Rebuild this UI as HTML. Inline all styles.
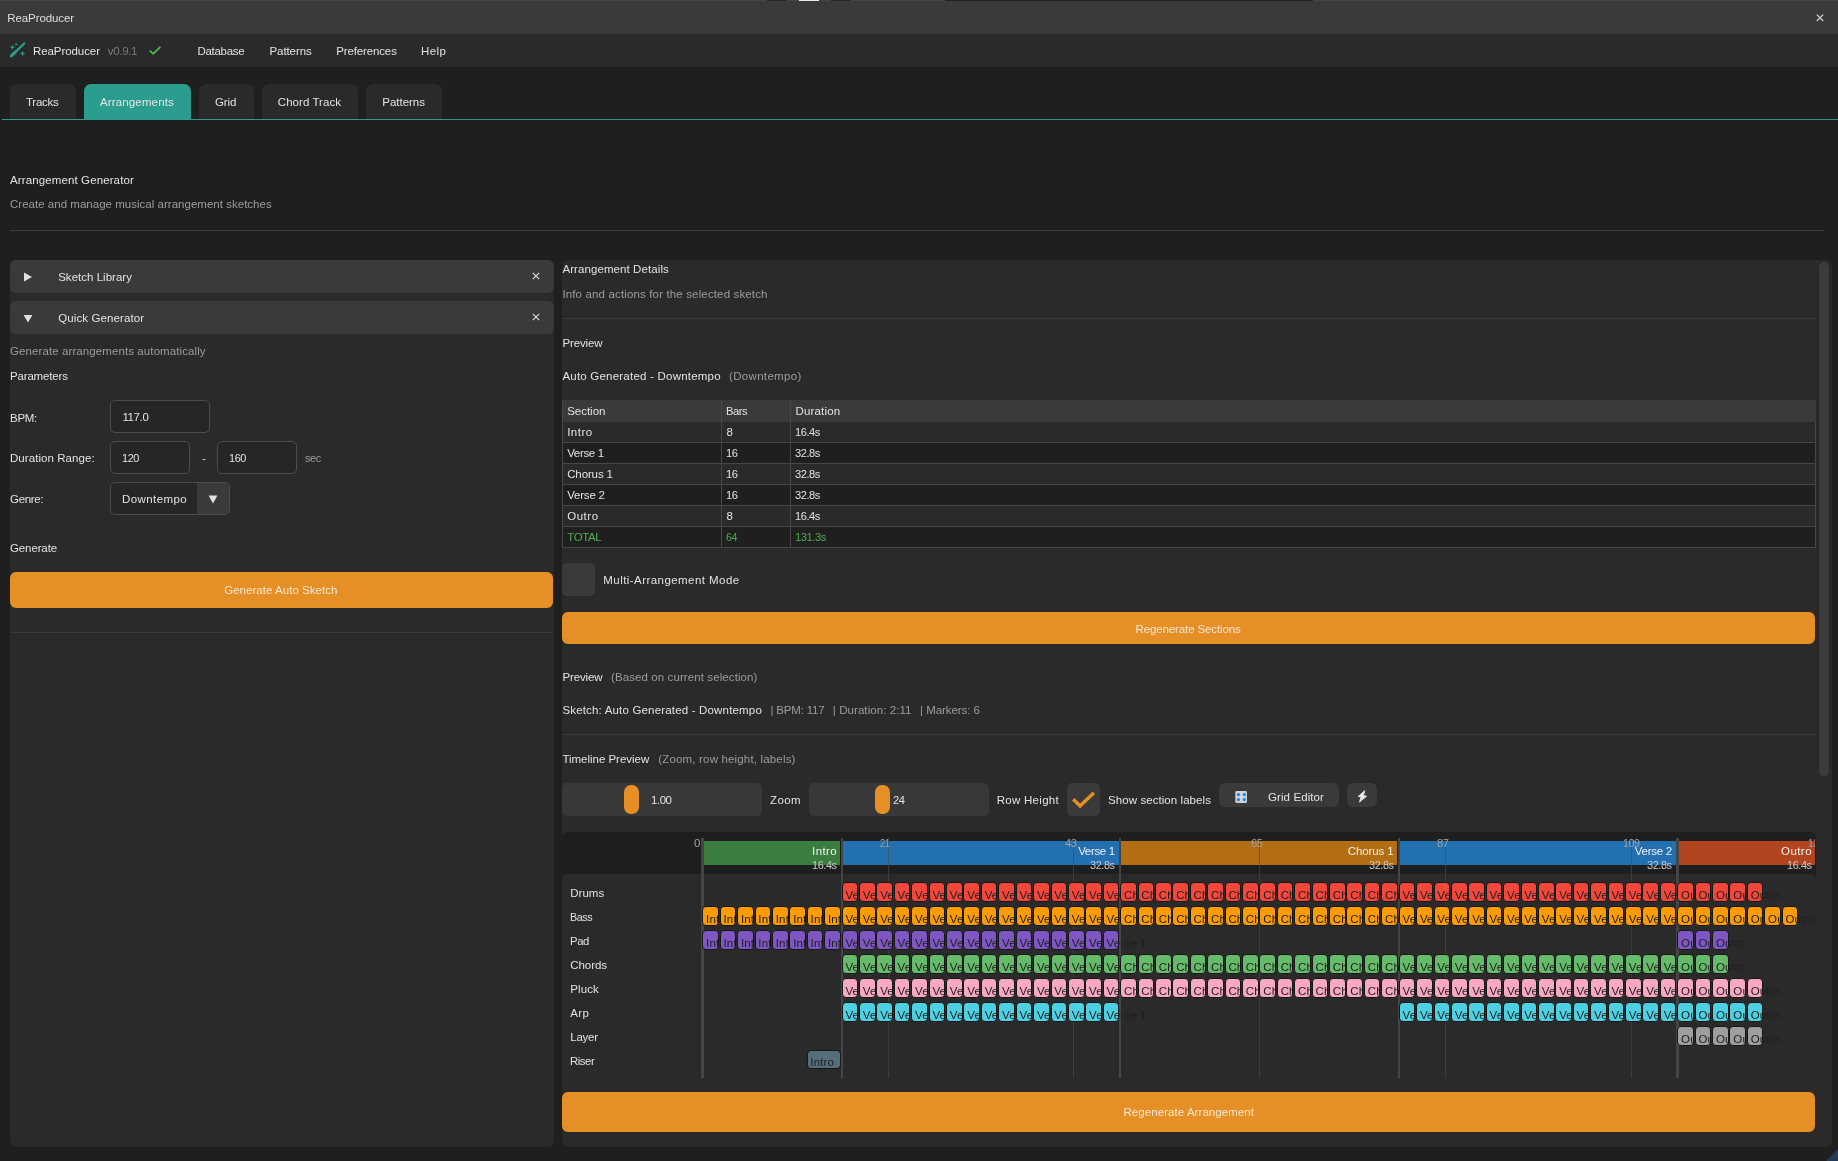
<!DOCTYPE html>
<html><head><meta charset="utf-8"><title>ReaProducer</title>
<style>
html,body{margin:0;padding:0;}
body{width:1838px;height:1161px;position:relative;overflow:hidden;background:#1f1f1f;will-change:transform;font-family:"Liberation Sans",sans-serif;font-size:11.5px;letter-spacing:-0.2px;}
.r{position:absolute;}
.t{position:absolute;white-space:nowrap;line-height:14px;}
.c{position:absolute;width:14.6px;border:1px solid #171717;border-radius:4px;color:#1e1e1e;font-size:11.5px;line-height:14px;box-sizing:content-box;white-space:nowrap;text-indent:2.8px;padding-top:4.7px;height:13.2px;letter-spacing:0.15px;}
</style></head><body>
<div class="r" style="left:0px;top:0px;width:1838px;height:34px;background:#3a3a3a;"></div>
<div class="r" style="left:0px;top:0px;width:1838px;height:1px;background:#444444;"></div>
<div class="r" style="left:767px;top:0px;width:20px;height:1px;background:#262626;"></div>
<div class="r" style="left:798.6px;top:0px;width:20.600000000000023px;height:1px;background:#e8e8e8;"></div>
<div class="r" style="left:831px;top:0px;width:20px;height:1px;background:#262626;"></div>
<div class="r" style="left:945px;top:0px;width:368px;height:1px;background:#232323;"></div>
<div class="t" style="left:7.30px;top:10.70px;color:#dedede;letter-spacing:-0.096px;">ReaProducer</div>
<svg class="r" style="left:1814px;top:12px" width="12" height="12" viewBox="0 0 12 12"><path d="M2.8 2.6L9.2 9.0M9.2 2.6L2.8 9.0" stroke="#d0d0d0" stroke-width="1.3"/></svg>
<div class="r" style="left:0px;top:34px;width:1838px;height:33px;background:#2a2a2a;"></div>
<svg class="r" style="left:5px;top:38px" width="30" height="24" viewBox="0 0 30 24">
<path d="M6.3 17.9 L19.3 5.5" stroke="#2a9d8f" stroke-width="2.3" stroke-linecap="round"/>
<path d="M6.2 18.0 L10.6 13.8" stroke="#2a9d8f" stroke-width="3.0" stroke-linecap="round"/>
<path d="M7.40 6.70 L8.13 8.57 L10.00 9.30 L8.13 10.03 L7.40 11.90 L6.67 10.03 L4.80 9.30 L6.67 8.57Z" fill="#2a9d8f"/>
<path d="M17.60 12.80 L18.36 14.74 L20.30 15.50 L18.36 16.26 L17.60 18.20 L16.84 16.26 L14.90 15.50 L16.84 14.74Z" fill="#2a9d8f"/>
<ellipse cx="11.2" cy="6.3" rx="1.3" ry="0.9" fill="#2a9d8f"/>
</svg>
<div class="t" style="left:33.00px;top:43.90px;color:#e2e2e2;letter-spacing:-0.076px;">ReaProducer</div>
<div class="t" style="left:107.80px;top:43.90px;color:#7c7c7c;letter-spacing:-0.325px;">v0.9.1</div>
<svg class="r" style="left:148px;top:45px" width="14" height="11" viewBox="0 0 14 11"><path d="M1.8 5.6 L5.2 8.9 L12.4 1.8" stroke="#4cbb55" stroke-width="1.7" fill="none"/></svg>
<div class="t" style="left:197.40px;top:43.90px;color:#e2e2e2;letter-spacing:-0.276px;">Database</div>
<div class="t" style="left:269.50px;top:43.90px;color:#e2e2e2;letter-spacing:-0.089px;">Patterns</div>
<div class="t" style="left:336.20px;top:43.90px;color:#e2e2e2;letter-spacing:-0.131px;">Preferences</div>
<div class="t" style="left:421.10px;top:43.90px;color:#e2e2e2;letter-spacing:0.382px;">Help</div>
<div class="r" style="left:10px;top:84px;width:66px;height:35px;background:#2a2a2a;border-radius:7px 7px 0 0;"></div>
<div class="t" style="left:26.00px;top:94.90px;color:#e2e2e2;letter-spacing:-0.265px;">Tracks</div>
<div class="r" style="left:84px;top:84px;width:107px;height:35px;background:#2a9d8f;border-radius:7px 7px 0 0;"></div>
<div class="t" style="left:100.00px;top:94.90px;color:#e6e6e6;letter-spacing:0.138px;">Arrangements</div>
<div class="r" style="left:199px;top:84px;width:55px;height:35px;background:#2a2a2a;border-radius:7px 7px 0 0;"></div>
<div class="t" style="left:215.00px;top:94.90px;color:#e2e2e2;letter-spacing:-0.075px;">Grid</div>
<div class="r" style="left:262px;top:84px;width:96px;height:35px;background:#2a2a2a;border-radius:7px 7px 0 0;"></div>
<div class="t" style="left:277.80px;top:94.90px;color:#e2e2e2;letter-spacing:0.055px;">Chord Track</div>
<div class="r" style="left:366px;top:84px;width:76px;height:35px;background:#2a2a2a;border-radius:7px 7px 0 0;"></div>
<div class="t" style="left:382.30px;top:94.90px;color:#e2e2e2;letter-spacing:-0.018px;">Patterns</div>
<div class="r" style="left:2px;top:119px;width:1836px;height:1px;background:#2a9d8f;"></div>
<div class="t" style="left:10.00px;top:172.50px;color:#e2e2e2;letter-spacing:0.117px;">Arrangement Generator</div>
<div class="t" style="left:10.00px;top:197.00px;color:#9c9c9c;letter-spacing:0.020px;">Create and manage musical arrangement sketches</div>
<div class="r" style="left:10px;top:230px;width:1814px;height:1px;background:#3a3a3a;"></div>
<div class="r" style="left:10px;top:260px;width:544px;height:887px;background:#2a2a2a;border-radius:7px;"></div>
<div class="r" style="left:10px;top:260px;width:544px;height:33px;background:#3a3a3a;border-radius:6px;"></div>
<svg class="r" style="left:23px;top:271.5px" width="10" height="10" viewBox="0 0 10 10"><path d="M1 0.5 L9 5 L1 9.5z" fill="#e0e0e0"/></svg>
<div class="t" style="left:58.20px;top:270.00px;color:#e2e2e2;letter-spacing:0.015px;">Sketch Library</div>
<svg class="r" style="left:531px;top:271px" width="10" height="10" viewBox="0 0 10 10"><path d="M1.8 1.8L8.2 8.2M8.2 1.8L1.8 8.2" stroke="#dadada" stroke-width="1.2"/></svg>
<div class="r" style="left:10px;top:301px;width:544px;height:33px;background:#3a3a3a;border-radius:6px;"></div>
<svg class="r" style="left:23px;top:313.5px" width="10" height="10" viewBox="0 0 10 10"><path d="M0.6 1 L9.4 1 L5 8.6z" fill="#e0e0e0"/></svg>
<div class="t" style="left:58.20px;top:311.00px;color:#e2e2e2;letter-spacing:0.117px;">Quick Generator</div>
<svg class="r" style="left:531px;top:312px" width="10" height="10" viewBox="0 0 10 10"><path d="M1.8 1.8L8.2 8.2M8.2 1.8L1.8 8.2" stroke="#dadada" stroke-width="1.2"/></svg>
<div class="t" style="left:10.00px;top:344.00px;color:#9c9c9c;letter-spacing:0.094px;">Generate arrangements automatically</div>
<div class="t" style="left:10.00px;top:369.20px;color:#e2e2e2;letter-spacing:-0.172px;">Parameters</div>
<div class="t" style="left:10.00px;top:410.50px;color:#e2e2e2;letter-spacing:-0.272px;">BPM:</div>
<div class="r" style="left:110px;top:400px;width:100px;height:33px;background:#262626;border:1px solid #4c4c4c;box-sizing:border-box;border-radius:5px;"></div>
<div class="t" style="left:122.40px;top:410.10px;color:#e2e2e2;letter-spacing:-0.381px;">117.0</div>
<div class="t" style="left:10.00px;top:451.40px;color:#e2e2e2;letter-spacing:0.061px;">Duration Range:</div>
<div class="r" style="left:110px;top:441px;width:80px;height:33px;background:#262626;border:1px solid #4c4c4c;box-sizing:border-box;border-radius:5px;"></div>
<div class="t" style="left:122.40px;top:451.10px;color:#e2e2e2;letter-spacing:-0.450px;transform:scaleX(0.9518);transform-origin:0 0;">120</div>
<div class="t" style="left:202.00px;top:451.40px;color:#e2e2e2;letter-spacing:-0.200px;">-</div>
<div class="r" style="left:217px;top:441px;width:80px;height:33px;background:#262626;border:1px solid #4c4c4c;box-sizing:border-box;border-radius:5px;"></div>
<div class="t" style="left:229.40px;top:451.10px;color:#e2e2e2;letter-spacing:-0.450px;transform:scaleX(0.9518);transform-origin:0 0;">160</div>
<div class="t" style="left:305.20px;top:451.40px;color:#9c9c9c;letter-spacing:-0.450px;transform:scaleX(0.9533);transform-origin:0 0;">sec</div>
<div class="t" style="left:10.00px;top:492.40px;color:#e2e2e2;letter-spacing:-0.311px;">Genre:</div>
<div class="r" style="left:110px;top:482px;width:120px;height:33px;background:#262626;border:1px solid #4c4c4c;box-sizing:border-box;border-radius:5px;"></div>
<div class="r" style="left:197px;top:483px;width:32px;height:31px;background:#3a3a3a;border-radius:0 4px 4px 0;"></div>
<svg class="r" style="left:208px;top:494.5px" width="10" height="9" viewBox="0 0 10 9"><path d="M0.6 0.6 L9.4 0.6 L5 8.4z" fill="#e0e0e0"/></svg>
<div class="t" style="left:122.00px;top:492.40px;color:#e2e2e2;letter-spacing:0.417px;">Downtempo</div>
<div class="t" style="left:10.00px;top:541.20px;color:#e2e2e2;letter-spacing:-0.120px;">Generate</div>
<div class="r" style="left:10px;top:572px;width:543px;height:36px;background:#e58f26;border-radius:6px;"></div>
<div class="t" style="left:224.20px;top:582.90px;color:#f6e7d2;letter-spacing:0.036px;">Generate Auto Sketch</div>
<div class="r" style="left:10px;top:632px;width:543px;height:1px;background:#3a3a3a;"></div>
<div class="r" style="left:562px;top:260px;width:1270px;height:887px;background:#2a2a2a;border-radius:7px;"></div>
<div class="r" style="left:1819px;top:262px;width:10px;height:514px;background:#3c3c3c;border-radius:5px;"></div>
<div class="t" style="left:562.40px;top:261.60px;color:#e2e2e2;letter-spacing:0.088px;">Arrangement Details</div>
<div class="t" style="left:562.40px;top:286.50px;color:#9c9c9c;letter-spacing:0.145px;">Info and actions for the selected sketch</div>
<div class="r" style="left:562px;top:318px;width:1254px;height:1px;background:#3a3a3a;"></div>
<div class="t" style="left:562.40px;top:335.80px;color:#e2e2e2;letter-spacing:-0.107px;">Preview</div>
<div class="t" style="left:562.40px;top:369.10px;color:#e2e2e2;letter-spacing:0.217px;">Auto Generated - Downtempo</div>
<div class="t" style="left:729.00px;top:369.10px;color:#9c9c9c;letter-spacing:0.328px;">(Downtempo)</div>
<div class="r" style="left:562px;top:400px;width:1254px;height:22px;background:#3a3a3a;"></div>
<div class="t" style="left:567.20px;top:404.10px;color:#e2e2e2;letter-spacing:-0.025px;">Section</div>
<div class="t" style="left:726.40px;top:404.10px;color:#e2e2e2;letter-spacing:-0.450px;transform:scaleX(0.9734);transform-origin:0 0;">Bars</div>
<div class="t" style="left:795.40px;top:404.10px;color:#e2e2e2;letter-spacing:0.190px;">Duration</div>
<div class="r" style="left:562px;top:422px;width:1254px;height:21px;background:#2a2a2a;border-bottom:1px solid #474747;box-sizing:border-box;"></div>
<div class="t" style="left:567.20px;top:424.70px;color:#e2e2e2;letter-spacing:0.472px;">Intro</div>
<div class="t" style="left:726.40px;top:424.70px;color:#e2e2e2;letter-spacing:-0.200px;">8</div>
<div class="t" style="left:795.40px;top:424.70px;color:#e2e2e2;letter-spacing:-0.450px;transform:scaleX(0.9647);transform-origin:0 0;">16.4s</div>
<div class="r" style="left:562px;top:443px;width:1254px;height:21px;background:#1f1f1f;border-bottom:1px solid #474747;box-sizing:border-box;"></div>
<div class="t" style="left:567.20px;top:445.70px;color:#e2e2e2;letter-spacing:-0.349px;">Verse 1</div>
<div class="t" style="left:726.40px;top:445.70px;color:#e2e2e2;letter-spacing:-0.450px;transform:scaleX(0.9726);transform-origin:0 0;">16</div>
<div class="t" style="left:795.40px;top:445.70px;color:#e2e2e2;letter-spacing:-0.450px;transform:scaleX(0.9647);transform-origin:0 0;">32.8s</div>
<div class="r" style="left:562px;top:464px;width:1254px;height:21px;background:#2a2a2a;border-bottom:1px solid #474747;box-sizing:border-box;"></div>
<div class="t" style="left:567.20px;top:466.70px;color:#e2e2e2;letter-spacing:-0.124px;">Chorus 1</div>
<div class="t" style="left:726.40px;top:466.70px;color:#e2e2e2;letter-spacing:-0.450px;transform:scaleX(0.9726);transform-origin:0 0;">16</div>
<div class="t" style="left:795.40px;top:466.70px;color:#e2e2e2;letter-spacing:-0.450px;transform:scaleX(0.9647);transform-origin:0 0;">32.8s</div>
<div class="r" style="left:562px;top:485px;width:1254px;height:21px;background:#1f1f1f;border-bottom:1px solid #474747;box-sizing:border-box;"></div>
<div class="t" style="left:567.20px;top:487.70px;color:#e2e2e2;letter-spacing:-0.199px;">Verse 2</div>
<div class="t" style="left:726.40px;top:487.70px;color:#e2e2e2;letter-spacing:-0.450px;transform:scaleX(0.9726);transform-origin:0 0;">16</div>
<div class="t" style="left:795.40px;top:487.70px;color:#e2e2e2;letter-spacing:-0.450px;transform:scaleX(0.9647);transform-origin:0 0;">32.8s</div>
<div class="r" style="left:562px;top:506px;width:1254px;height:21px;background:#2a2a2a;border-bottom:1px solid #474747;box-sizing:border-box;"></div>
<div class="t" style="left:567.20px;top:508.70px;color:#e2e2e2;letter-spacing:0.535px;">Outro</div>
<div class="t" style="left:726.40px;top:508.70px;color:#e2e2e2;letter-spacing:-0.200px;">8</div>
<div class="t" style="left:795.40px;top:508.70px;color:#e2e2e2;letter-spacing:-0.450px;transform:scaleX(0.9647);transform-origin:0 0;">16.4s</div>
<div class="r" style="left:562px;top:527px;width:1254px;height:21px;background:#1f1f1f;border-bottom:1px solid #474747;box-sizing:border-box;"></div>
<div class="t" style="left:567.20px;top:529.70px;color:#4cae4f;letter-spacing:-0.374px;">TOTAL</div>
<div class="t" style="left:726.40px;top:529.70px;color:#4cae4f;letter-spacing:-0.450px;transform:scaleX(0.9240);transform-origin:0 0;">64</div>
<div class="t" style="left:795.40px;top:529.70px;color:#4cae4f;letter-spacing:-0.450px;transform:scaleX(0.9729);transform-origin:0 0;">131.3s</div>
<div class="r" style="left:562px;top:400px;width:1px;height:147px;background:#474747;"></div>
<div class="r" style="left:1815px;top:422px;width:1px;height:125px;background:#474747;"></div>
<div class="r" style="left:721px;top:400px;width:1px;height:147px;background:#474747;"></div>
<div class="r" style="left:790px;top:400px;width:1px;height:147px;background:#474747;"></div>
<div class="r" style="left:562px;top:563px;width:33px;height:33px;background:#3a3a3a;border-radius:5px;"></div>
<div class="t" style="left:603.30px;top:573.10px;color:#e2e2e2;letter-spacing:0.441px;">Multi-Arrangement Mode</div>
<div class="r" style="left:562px;top:612px;width:1253px;height:32px;background:#e58f26;border-radius:6px;"></div>
<div class="t" style="left:1135.60px;top:621.70px;color:#f6e7d2;letter-spacing:-0.128px;">Regenerate Sections</div>
<div class="t" style="left:562.40px;top:669.60px;color:#e2e2e2;letter-spacing:-0.107px;">Preview</div>
<div class="t" style="left:611.00px;top:669.60px;color:#9c9c9c;letter-spacing:0.096px;">(Based on current selection)</div>
<div class="t" style="left:562.40px;top:702.90px;color:#e2e2e2;letter-spacing:0.173px;">Sketch: Auto Generated - Downtempo</div>
<div class="t" style="left:770.50px;top:702.90px;color:#9c9c9c;letter-spacing:-0.181px;">| BPM: 117</div>
<div class="t" style="left:832.80px;top:702.90px;color:#9c9c9c;letter-spacing:0.076px;">| Duration: 2:11</div>
<div class="t" style="left:920.10px;top:702.90px;color:#9c9c9c;letter-spacing:-0.055px;">| Markers: 6</div>
<div class="r" style="left:562px;top:734px;width:1254px;height:1px;background:#3a3a3a;"></div>
<div class="t" style="left:562.40px;top:751.90px;color:#e2e2e2;letter-spacing:-0.017px;">Timeline Preview</div>
<div class="t" style="left:658.30px;top:751.90px;color:#9c9c9c;letter-spacing:0.166px;">(Zoom, row height, labels)</div>
<div class="r" style="left:562px;top:783px;width:200px;height:33px;background:#383838;border-radius:5px;"></div>
<div class="r" style="left:624px;top:785px;width:15px;height:29px;background:#e58f26;border-radius:7px;"></div>
<div class="t" style="left:651.10px;top:793.20px;color:#e2e2e2;letter-spacing:-0.450px;transform:scaleX(0.9986);transform-origin:0 0;">1.00</div>
<div class="t" style="left:769.90px;top:793.20px;color:#e2e2e2;letter-spacing:0.469px;">Zoom</div>
<div class="r" style="left:809px;top:783px;width:180px;height:33px;background:#383838;border-radius:5px;"></div>
<div class="r" style="left:875px;top:785px;width:15px;height:29px;background:#e58f26;border-radius:7px;"></div>
<div class="t" style="left:893.20px;top:793.20px;color:#e2e2e2;letter-spacing:-0.450px;transform:scaleX(0.9726);transform-origin:0 0;">24</div>
<div class="t" style="left:996.70px;top:793.20px;color:#e2e2e2;letter-spacing:0.284px;">Row Height</div>
<div class="r" style="left:1067px;top:783px;width:33px;height:33px;background:#3a3a3a;border-radius:5px;"></div>
<svg class="r" style="left:1067px;top:783px" width="33" height="33" viewBox="0 0 33 33"><path d="M6.2 16.3 L13.1 23 L26.9 9.75" stroke="#e58f26" stroke-width="3.4" fill="none"/></svg>
<div class="t" style="left:1108.10px;top:793.20px;color:#e2e2e2;letter-spacing:0.065px;">Show section labels</div>
<div class="r" style="left:1219px;top:783px;width:120px;height:24px;background:#3a3a3a;border-radius:6px;"></div>
<svg class="r" style="left:1235px;top:791px" width="13" height="13" viewBox="0 0 13 13">
<rect x="0.3" y="0" width="11.7" height="11.9" rx="1.4" fill="#d2d2d2"/>
<path d="M6.2 0.8 V11.2" stroke="#e6e6e6" stroke-width="0.8"/>
<circle cx="3.5" cy="3.6" r="1.7" fill="#1a8cf0"/><circle cx="9.3" cy="3.6" r="1.7" fill="#1a8cf0"/>
<circle cx="3.5" cy="8.6" r="1.7" fill="#1a8cf0"/><circle cx="9.3" cy="8.6" r="1.7" fill="#1a8cf0"/>
</svg>
<div class="t" style="left:1268.00px;top:790.30px;color:#e2e2e2;letter-spacing:0.094px;">Grid Editor</div>
<div class="r" style="left:1347px;top:783px;width:30px;height:24px;background:#3a3a3a;border-radius:6px;"></div>
<svg class="r" style="left:1357px;top:790px" width="11" height="13" viewBox="0 0 11 13"><path d="M7.7 0.7 L1.2 6.4 L4.1 6.9 L2.5 12.0 L9.6 6.2 L6.5 5.7 Z" fill="#e8e8e8" stroke="#e8e8e8" stroke-width="0.9" stroke-linejoin="round"/></svg>
<div class="r" style="left:562px;top:832px;width:1254px;height:246px;background:#1e1e1e;border-radius:6px;"></div>
<div class="r" style="left:562px;top:874px;width:1254px;height:204px;background:#2a2a2a;border-radius:6px 6px 0 0;"></div>
<div class="r" style="left:703.5px;top:841px;width:136.8px;height:24px;background:#3b7d3f"></div>
<div class="r" style="left:842.8px;top:841px;width:276.1px;height:24px;background:#2270b0"></div>
<div class="r" style="left:1121.3px;top:841px;width:276.1px;height:24px;background:#b26e10"></div>
<div class="r" style="left:1399.9px;top:841px;width:276.1px;height:24px;background:#2270b0"></div>
<div class="r" style="left:1678.5px;top:841px;width:136.5px;height:24px;background:#b24520"></div>
<div class="r" style="left:887.7px;top:838px;width:1px;height:240px;background:rgba(72,72,72,0.65)"></div>
<div class="r" style="left:1073.4px;top:838px;width:1px;height:240px;background:rgba(72,72,72,0.65)"></div>
<div class="r" style="left:1259.1px;top:838px;width:1px;height:240px;background:rgba(72,72,72,0.65)"></div>
<div class="r" style="left:1444.8px;top:838px;width:1px;height:240px;background:rgba(72,72,72,0.65)"></div>
<div class="r" style="left:1630.5px;top:838px;width:1px;height:240px;background:rgba(72,72,72,0.65)"></div>
<div class="r" style="left:701.40px;top:838px;width:2.2px;height:240px;background:#454545"></div>
<div class="r" style="left:840.68px;top:838px;width:2.2px;height:240px;background:#454545"></div>
<div class="r" style="left:1119.24px;top:838px;width:2.2px;height:240px;background:#454545"></div>
<div class="r" style="left:1397.80px;top:838px;width:2.2px;height:240px;background:#454545"></div>
<div class="r" style="left:1676.36px;top:838px;width:2.2px;height:240px;background:#454545"></div>
<div class="r" style="left:0;top:830px;width:1815px;height:30px;overflow:hidden">
<div class="t" style="left:694.00px;top:5.90px;color:#a2a2a2;letter-spacing:-0.200px;font-size:11.5px;">0</div>
<div class="t" style="left:879.70px;top:5.90px;color:#a2a2a2;letter-spacing:-0.450px;transform:scaleX(0.8105);transform-origin:0 0;font-size:11.5px;">21</div>
<div class="t" style="left:1065.40px;top:5.90px;color:#a2a2a2;letter-spacing:-0.450px;transform:scaleX(0.9726);transform-origin:0 0;font-size:11.5px;">43</div>
<div class="t" style="left:1251.10px;top:5.90px;color:#a2a2a2;letter-spacing:-0.450px;transform:scaleX(0.9726);transform-origin:0 0;font-size:11.5px;">65</div>
<div class="t" style="left:1436.80px;top:5.90px;color:#a2a2a2;letter-spacing:-0.450px;transform:scaleX(0.9726);transform-origin:0 0;font-size:11.5px;">87</div>
<div class="t" style="left:1622.50px;top:5.90px;color:#a2a2a2;letter-spacing:-0.450px;transform:scaleX(0.9299);transform-origin:0 0;font-size:11.5px;">109</div>
<div class="t" style="left:1808.20px;top:5.90px;color:#a2a2a2;letter-spacing:-0.450px;transform:scaleX(0.8752);transform-origin:0 0;font-size:11.5px;">131</div>
</div>
<div class="t" style="left:812.08px;top:844.30px;color:#f0f0f0;letter-spacing:0.372px;">Intro</div>
<div class="t" style="left:811.58px;top:858.10px;color:#c8c8c8;letter-spacing:-0.450px;transform:scaleX(0.9495);transform-origin:0 0;">16.4s</div>
<div class="t" style="left:1078.14px;top:844.30px;color:#f0f0f0;letter-spacing:-0.333px;">Verse 1</div>
<div class="t" style="left:1090.14px;top:858.10px;color:#c8c8c8;letter-spacing:-0.450px;transform:scaleX(0.9495);transform-origin:0 0;">32.8s</div>
<div class="t" style="left:1347.70px;top:844.30px;color:#f0f0f0;letter-spacing:-0.095px;">Chorus 1</div>
<div class="t" style="left:1368.70px;top:858.10px;color:#c8c8c8;letter-spacing:-0.450px;transform:scaleX(0.9495);transform-origin:0 0;">32.8s</div>
<div class="t" style="left:1634.76px;top:844.30px;color:#f0f0f0;letter-spacing:-0.249px;">Verse 2</div>
<div class="t" style="left:1647.26px;top:858.10px;color:#c8c8c8;letter-spacing:-0.450px;transform:scaleX(0.9495);transform-origin:0 0;">32.8s</div>
<div class="t" style="left:1781.04px;top:844.30px;color:#f0f0f0;letter-spacing:0.435px;">Outro</div>
<div class="t" style="left:1786.54px;top:858.10px;color:#c8c8c8;letter-spacing:-0.450px;transform:scaleX(0.9495);transform-origin:0 0;">16.4s</div>
<div class="r" style="left:0;top:874px;width:1815px;height:210px;overflow:hidden">
<div class="c" style="left:841.58px;top:8px;background:#f2473a;overflow:hidden;">Verse 1</div>
<div class="c" style="left:858.99px;top:8px;background:#f2473a;overflow:hidden;">Verse 1</div>
<div class="c" style="left:876.40px;top:8px;background:#f2473a;overflow:hidden;">Verse 1</div>
<div class="c" style="left:893.81px;top:8px;background:#f2473a;overflow:hidden;">Verse 1</div>
<div class="c" style="left:911.22px;top:8px;background:#f2473a;overflow:hidden;">Verse 1</div>
<div class="c" style="left:928.63px;top:8px;background:#f2473a;overflow:hidden;">Verse 1</div>
<div class="c" style="left:946.04px;top:8px;background:#f2473a;overflow:hidden;">Verse 1</div>
<div class="c" style="left:963.45px;top:8px;background:#f2473a;overflow:hidden;">Verse 1</div>
<div class="c" style="left:980.86px;top:8px;background:#f2473a;overflow:hidden;">Verse 1</div>
<div class="c" style="left:998.27px;top:8px;background:#f2473a;overflow:hidden;">Verse 1</div>
<div class="c" style="left:1015.68px;top:8px;background:#f2473a;overflow:hidden;">Verse 1</div>
<div class="c" style="left:1033.09px;top:8px;background:#f2473a;overflow:hidden;">Verse 1</div>
<div class="c" style="left:1050.50px;top:8px;background:#f2473a;overflow:hidden;">Verse 1</div>
<div class="c" style="left:1067.91px;top:8px;background:#f2473a;overflow:hidden;">Verse 1</div>
<div class="c" style="left:1085.32px;top:8px;background:#f2473a;overflow:hidden;">Verse 1</div>
<div class="c" style="left:1102.73px;top:8px;background:#f2473a;">Verse 1</div>
<div class="c" style="left:1120.14px;top:8px;background:#f2473a;overflow:hidden;">Chorus 1</div>
<div class="c" style="left:1137.55px;top:8px;background:#f2473a;overflow:hidden;">Chorus 1</div>
<div class="c" style="left:1154.96px;top:8px;background:#f2473a;overflow:hidden;">Chorus 1</div>
<div class="c" style="left:1172.37px;top:8px;background:#f2473a;overflow:hidden;">Chorus 1</div>
<div class="c" style="left:1189.78px;top:8px;background:#f2473a;overflow:hidden;">Chorus 1</div>
<div class="c" style="left:1207.19px;top:8px;background:#f2473a;overflow:hidden;">Chorus 1</div>
<div class="c" style="left:1224.60px;top:8px;background:#f2473a;overflow:hidden;">Chorus 1</div>
<div class="c" style="left:1242.01px;top:8px;background:#f2473a;overflow:hidden;">Chorus 1</div>
<div class="c" style="left:1259.42px;top:8px;background:#f2473a;overflow:hidden;">Chorus 1</div>
<div class="c" style="left:1276.83px;top:8px;background:#f2473a;overflow:hidden;">Chorus 1</div>
<div class="c" style="left:1294.24px;top:8px;background:#f2473a;overflow:hidden;">Chorus 1</div>
<div class="c" style="left:1311.65px;top:8px;background:#f2473a;overflow:hidden;">Chorus 1</div>
<div class="c" style="left:1329.06px;top:8px;background:#f2473a;overflow:hidden;">Chorus 1</div>
<div class="c" style="left:1346.47px;top:8px;background:#f2473a;overflow:hidden;">Chorus 1</div>
<div class="c" style="left:1363.88px;top:8px;background:#f2473a;overflow:hidden;">Chorus 1</div>
<div class="c" style="left:1381.29px;top:8px;background:#f2473a;">Chorus 1</div>
<div class="c" style="left:1398.70px;top:8px;background:#f2473a;overflow:hidden;">Verse 2</div>
<div class="c" style="left:1416.11px;top:8px;background:#f2473a;overflow:hidden;">Verse 2</div>
<div class="c" style="left:1433.52px;top:8px;background:#f2473a;overflow:hidden;">Verse 2</div>
<div class="c" style="left:1450.93px;top:8px;background:#f2473a;overflow:hidden;">Verse 2</div>
<div class="c" style="left:1468.34px;top:8px;background:#f2473a;overflow:hidden;">Verse 2</div>
<div class="c" style="left:1485.75px;top:8px;background:#f2473a;overflow:hidden;">Verse 2</div>
<div class="c" style="left:1503.16px;top:8px;background:#f2473a;overflow:hidden;">Verse 2</div>
<div class="c" style="left:1520.57px;top:8px;background:#f2473a;overflow:hidden;">Verse 2</div>
<div class="c" style="left:1537.98px;top:8px;background:#f2473a;overflow:hidden;">Verse 2</div>
<div class="c" style="left:1555.39px;top:8px;background:#f2473a;overflow:hidden;">Verse 2</div>
<div class="c" style="left:1572.80px;top:8px;background:#f2473a;overflow:hidden;">Verse 2</div>
<div class="c" style="left:1590.21px;top:8px;background:#f2473a;overflow:hidden;">Verse 2</div>
<div class="c" style="left:1607.62px;top:8px;background:#f2473a;overflow:hidden;">Verse 2</div>
<div class="c" style="left:1625.03px;top:8px;background:#f2473a;overflow:hidden;">Verse 2</div>
<div class="c" style="left:1642.44px;top:8px;background:#f2473a;overflow:hidden;">Verse 2</div>
<div class="c" style="left:1659.85px;top:8px;background:#f2473a;">Verse 2</div>
<div class="c" style="left:1677.26px;top:8px;background:#f2473a;overflow:hidden;">Outro</div>
<div class="c" style="left:1694.67px;top:8px;background:#f2473a;overflow:hidden;">Outro</div>
<div class="c" style="left:1712.08px;top:8px;background:#f2473a;overflow:hidden;">Outro</div>
<div class="c" style="left:1729.49px;top:8px;background:#f2473a;overflow:hidden;">Outro</div>
<div class="c" style="left:1746.90px;top:8px;background:#f2473a;">Outro</div>
<div class="c" style="left:702.30px;top:32px;background:#fb9c07;overflow:hidden;">Intro</div>
<div class="c" style="left:719.71px;top:32px;background:#fb9c07;overflow:hidden;">Intro</div>
<div class="c" style="left:737.12px;top:32px;background:#fb9c07;overflow:hidden;">Intro</div>
<div class="c" style="left:754.53px;top:32px;background:#fb9c07;overflow:hidden;">Intro</div>
<div class="c" style="left:771.94px;top:32px;background:#fb9c07;overflow:hidden;">Intro</div>
<div class="c" style="left:789.35px;top:32px;background:#fb9c07;overflow:hidden;">Intro</div>
<div class="c" style="left:806.76px;top:32px;background:#fb9c07;overflow:hidden;">Intro</div>
<div class="c" style="left:824.17px;top:32px;background:#fb9c07;">Intro</div>
<div class="c" style="left:841.58px;top:32px;background:#fb9c07;overflow:hidden;">Verse 1</div>
<div class="c" style="left:858.99px;top:32px;background:#fb9c07;overflow:hidden;">Verse 1</div>
<div class="c" style="left:876.40px;top:32px;background:#fb9c07;overflow:hidden;">Verse 1</div>
<div class="c" style="left:893.81px;top:32px;background:#fb9c07;overflow:hidden;">Verse 1</div>
<div class="c" style="left:911.22px;top:32px;background:#fb9c07;overflow:hidden;">Verse 1</div>
<div class="c" style="left:928.63px;top:32px;background:#fb9c07;overflow:hidden;">Verse 1</div>
<div class="c" style="left:946.04px;top:32px;background:#fb9c07;overflow:hidden;">Verse 1</div>
<div class="c" style="left:963.45px;top:32px;background:#fb9c07;overflow:hidden;">Verse 1</div>
<div class="c" style="left:980.86px;top:32px;background:#fb9c07;overflow:hidden;">Verse 1</div>
<div class="c" style="left:998.27px;top:32px;background:#fb9c07;overflow:hidden;">Verse 1</div>
<div class="c" style="left:1015.68px;top:32px;background:#fb9c07;overflow:hidden;">Verse 1</div>
<div class="c" style="left:1033.09px;top:32px;background:#fb9c07;overflow:hidden;">Verse 1</div>
<div class="c" style="left:1050.50px;top:32px;background:#fb9c07;overflow:hidden;">Verse 1</div>
<div class="c" style="left:1067.91px;top:32px;background:#fb9c07;overflow:hidden;">Verse 1</div>
<div class="c" style="left:1085.32px;top:32px;background:#fb9c07;overflow:hidden;">Verse 1</div>
<div class="c" style="left:1102.73px;top:32px;background:#fb9c07;">Verse 1</div>
<div class="c" style="left:1120.14px;top:32px;background:#fb9c07;overflow:hidden;">Chorus 1</div>
<div class="c" style="left:1137.55px;top:32px;background:#fb9c07;overflow:hidden;">Chorus 1</div>
<div class="c" style="left:1154.96px;top:32px;background:#fb9c07;overflow:hidden;">Chorus 1</div>
<div class="c" style="left:1172.37px;top:32px;background:#fb9c07;overflow:hidden;">Chorus 1</div>
<div class="c" style="left:1189.78px;top:32px;background:#fb9c07;overflow:hidden;">Chorus 1</div>
<div class="c" style="left:1207.19px;top:32px;background:#fb9c07;overflow:hidden;">Chorus 1</div>
<div class="c" style="left:1224.60px;top:32px;background:#fb9c07;overflow:hidden;">Chorus 1</div>
<div class="c" style="left:1242.01px;top:32px;background:#fb9c07;overflow:hidden;">Chorus 1</div>
<div class="c" style="left:1259.42px;top:32px;background:#fb9c07;overflow:hidden;">Chorus 1</div>
<div class="c" style="left:1276.83px;top:32px;background:#fb9c07;overflow:hidden;">Chorus 1</div>
<div class="c" style="left:1294.24px;top:32px;background:#fb9c07;overflow:hidden;">Chorus 1</div>
<div class="c" style="left:1311.65px;top:32px;background:#fb9c07;overflow:hidden;">Chorus 1</div>
<div class="c" style="left:1329.06px;top:32px;background:#fb9c07;overflow:hidden;">Chorus 1</div>
<div class="c" style="left:1346.47px;top:32px;background:#fb9c07;overflow:hidden;">Chorus 1</div>
<div class="c" style="left:1363.88px;top:32px;background:#fb9c07;overflow:hidden;">Chorus 1</div>
<div class="c" style="left:1381.29px;top:32px;background:#fb9c07;">Chorus 1</div>
<div class="c" style="left:1398.70px;top:32px;background:#fb9c07;overflow:hidden;">Verse 2</div>
<div class="c" style="left:1416.11px;top:32px;background:#fb9c07;overflow:hidden;">Verse 2</div>
<div class="c" style="left:1433.52px;top:32px;background:#fb9c07;overflow:hidden;">Verse 2</div>
<div class="c" style="left:1450.93px;top:32px;background:#fb9c07;overflow:hidden;">Verse 2</div>
<div class="c" style="left:1468.34px;top:32px;background:#fb9c07;overflow:hidden;">Verse 2</div>
<div class="c" style="left:1485.75px;top:32px;background:#fb9c07;overflow:hidden;">Verse 2</div>
<div class="c" style="left:1503.16px;top:32px;background:#fb9c07;overflow:hidden;">Verse 2</div>
<div class="c" style="left:1520.57px;top:32px;background:#fb9c07;overflow:hidden;">Verse 2</div>
<div class="c" style="left:1537.98px;top:32px;background:#fb9c07;overflow:hidden;">Verse 2</div>
<div class="c" style="left:1555.39px;top:32px;background:#fb9c07;overflow:hidden;">Verse 2</div>
<div class="c" style="left:1572.80px;top:32px;background:#fb9c07;overflow:hidden;">Verse 2</div>
<div class="c" style="left:1590.21px;top:32px;background:#fb9c07;overflow:hidden;">Verse 2</div>
<div class="c" style="left:1607.62px;top:32px;background:#fb9c07;overflow:hidden;">Verse 2</div>
<div class="c" style="left:1625.03px;top:32px;background:#fb9c07;overflow:hidden;">Verse 2</div>
<div class="c" style="left:1642.44px;top:32px;background:#fb9c07;overflow:hidden;">Verse 2</div>
<div class="c" style="left:1659.85px;top:32px;background:#fb9c07;">Verse 2</div>
<div class="c" style="left:1677.26px;top:32px;background:#fb9c07;overflow:hidden;">Outro</div>
<div class="c" style="left:1694.67px;top:32px;background:#fb9c07;overflow:hidden;">Outro</div>
<div class="c" style="left:1712.08px;top:32px;background:#fb9c07;overflow:hidden;">Outro</div>
<div class="c" style="left:1729.49px;top:32px;background:#fb9c07;overflow:hidden;">Outro</div>
<div class="c" style="left:1746.90px;top:32px;background:#fb9c07;overflow:hidden;">Outro</div>
<div class="c" style="left:1764.31px;top:32px;background:#fb9c07;overflow:hidden;">Outro</div>
<div class="c" style="left:1781.72px;top:32px;background:#fb9c07;">Outro</div>
<div class="c" style="left:702.30px;top:56px;background:#7e57c2;overflow:hidden;">Intro</div>
<div class="c" style="left:719.71px;top:56px;background:#7e57c2;overflow:hidden;">Intro</div>
<div class="c" style="left:737.12px;top:56px;background:#7e57c2;overflow:hidden;">Intro</div>
<div class="c" style="left:754.53px;top:56px;background:#7e57c2;overflow:hidden;">Intro</div>
<div class="c" style="left:771.94px;top:56px;background:#7e57c2;overflow:hidden;">Intro</div>
<div class="c" style="left:789.35px;top:56px;background:#7e57c2;overflow:hidden;">Intro</div>
<div class="c" style="left:806.76px;top:56px;background:#7e57c2;overflow:hidden;">Intro</div>
<div class="c" style="left:824.17px;top:56px;background:#7e57c2;">Intro</div>
<div class="c" style="left:841.58px;top:56px;background:#7e57c2;overflow:hidden;">Verse 1</div>
<div class="c" style="left:858.99px;top:56px;background:#7e57c2;overflow:hidden;">Verse 1</div>
<div class="c" style="left:876.40px;top:56px;background:#7e57c2;overflow:hidden;">Verse 1</div>
<div class="c" style="left:893.81px;top:56px;background:#7e57c2;overflow:hidden;">Verse 1</div>
<div class="c" style="left:911.22px;top:56px;background:#7e57c2;overflow:hidden;">Verse 1</div>
<div class="c" style="left:928.63px;top:56px;background:#7e57c2;overflow:hidden;">Verse 1</div>
<div class="c" style="left:946.04px;top:56px;background:#7e57c2;overflow:hidden;">Verse 1</div>
<div class="c" style="left:963.45px;top:56px;background:#7e57c2;overflow:hidden;">Verse 1</div>
<div class="c" style="left:980.86px;top:56px;background:#7e57c2;overflow:hidden;">Verse 1</div>
<div class="c" style="left:998.27px;top:56px;background:#7e57c2;overflow:hidden;">Verse 1</div>
<div class="c" style="left:1015.68px;top:56px;background:#7e57c2;overflow:hidden;">Verse 1</div>
<div class="c" style="left:1033.09px;top:56px;background:#7e57c2;overflow:hidden;">Verse 1</div>
<div class="c" style="left:1050.50px;top:56px;background:#7e57c2;overflow:hidden;">Verse 1</div>
<div class="c" style="left:1067.91px;top:56px;background:#7e57c2;overflow:hidden;">Verse 1</div>
<div class="c" style="left:1085.32px;top:56px;background:#7e57c2;overflow:hidden;">Verse 1</div>
<div class="c" style="left:1102.73px;top:56px;background:#7e57c2;">Verse 1</div>
<div class="c" style="left:1677.26px;top:56px;background:#7e57c2;overflow:hidden;">Outro</div>
<div class="c" style="left:1694.67px;top:56px;background:#7e57c2;overflow:hidden;">Outro</div>
<div class="c" style="left:1712.08px;top:56px;background:#7e57c2;">Outro</div>
<div class="c" style="left:841.58px;top:80px;background:#66bb6a;overflow:hidden;">Verse 1</div>
<div class="c" style="left:858.99px;top:80px;background:#66bb6a;overflow:hidden;">Verse 1</div>
<div class="c" style="left:876.40px;top:80px;background:#66bb6a;overflow:hidden;">Verse 1</div>
<div class="c" style="left:893.81px;top:80px;background:#66bb6a;overflow:hidden;">Verse 1</div>
<div class="c" style="left:911.22px;top:80px;background:#66bb6a;overflow:hidden;">Verse 1</div>
<div class="c" style="left:928.63px;top:80px;background:#66bb6a;overflow:hidden;">Verse 1</div>
<div class="c" style="left:946.04px;top:80px;background:#66bb6a;overflow:hidden;">Verse 1</div>
<div class="c" style="left:963.45px;top:80px;background:#66bb6a;overflow:hidden;">Verse 1</div>
<div class="c" style="left:980.86px;top:80px;background:#66bb6a;overflow:hidden;">Verse 1</div>
<div class="c" style="left:998.27px;top:80px;background:#66bb6a;overflow:hidden;">Verse 1</div>
<div class="c" style="left:1015.68px;top:80px;background:#66bb6a;overflow:hidden;">Verse 1</div>
<div class="c" style="left:1033.09px;top:80px;background:#66bb6a;overflow:hidden;">Verse 1</div>
<div class="c" style="left:1050.50px;top:80px;background:#66bb6a;overflow:hidden;">Verse 1</div>
<div class="c" style="left:1067.91px;top:80px;background:#66bb6a;overflow:hidden;">Verse 1</div>
<div class="c" style="left:1085.32px;top:80px;background:#66bb6a;overflow:hidden;">Verse 1</div>
<div class="c" style="left:1102.73px;top:80px;background:#66bb6a;">Verse 1</div>
<div class="c" style="left:1120.14px;top:80px;background:#66bb6a;overflow:hidden;">Chorus 1</div>
<div class="c" style="left:1137.55px;top:80px;background:#66bb6a;overflow:hidden;">Chorus 1</div>
<div class="c" style="left:1154.96px;top:80px;background:#66bb6a;overflow:hidden;">Chorus 1</div>
<div class="c" style="left:1172.37px;top:80px;background:#66bb6a;overflow:hidden;">Chorus 1</div>
<div class="c" style="left:1189.78px;top:80px;background:#66bb6a;overflow:hidden;">Chorus 1</div>
<div class="c" style="left:1207.19px;top:80px;background:#66bb6a;overflow:hidden;">Chorus 1</div>
<div class="c" style="left:1224.60px;top:80px;background:#66bb6a;overflow:hidden;">Chorus 1</div>
<div class="c" style="left:1242.01px;top:80px;background:#66bb6a;overflow:hidden;">Chorus 1</div>
<div class="c" style="left:1259.42px;top:80px;background:#66bb6a;overflow:hidden;">Chorus 1</div>
<div class="c" style="left:1276.83px;top:80px;background:#66bb6a;overflow:hidden;">Chorus 1</div>
<div class="c" style="left:1294.24px;top:80px;background:#66bb6a;overflow:hidden;">Chorus 1</div>
<div class="c" style="left:1311.65px;top:80px;background:#66bb6a;overflow:hidden;">Chorus 1</div>
<div class="c" style="left:1329.06px;top:80px;background:#66bb6a;overflow:hidden;">Chorus 1</div>
<div class="c" style="left:1346.47px;top:80px;background:#66bb6a;overflow:hidden;">Chorus 1</div>
<div class="c" style="left:1363.88px;top:80px;background:#66bb6a;overflow:hidden;">Chorus 1</div>
<div class="c" style="left:1381.29px;top:80px;background:#66bb6a;">Chorus 1</div>
<div class="c" style="left:1398.70px;top:80px;background:#66bb6a;overflow:hidden;">Verse 2</div>
<div class="c" style="left:1416.11px;top:80px;background:#66bb6a;overflow:hidden;">Verse 2</div>
<div class="c" style="left:1433.52px;top:80px;background:#66bb6a;overflow:hidden;">Verse 2</div>
<div class="c" style="left:1450.93px;top:80px;background:#66bb6a;overflow:hidden;">Verse 2</div>
<div class="c" style="left:1468.34px;top:80px;background:#66bb6a;overflow:hidden;">Verse 2</div>
<div class="c" style="left:1485.75px;top:80px;background:#66bb6a;overflow:hidden;">Verse 2</div>
<div class="c" style="left:1503.16px;top:80px;background:#66bb6a;overflow:hidden;">Verse 2</div>
<div class="c" style="left:1520.57px;top:80px;background:#66bb6a;overflow:hidden;">Verse 2</div>
<div class="c" style="left:1537.98px;top:80px;background:#66bb6a;overflow:hidden;">Verse 2</div>
<div class="c" style="left:1555.39px;top:80px;background:#66bb6a;overflow:hidden;">Verse 2</div>
<div class="c" style="left:1572.80px;top:80px;background:#66bb6a;overflow:hidden;">Verse 2</div>
<div class="c" style="left:1590.21px;top:80px;background:#66bb6a;overflow:hidden;">Verse 2</div>
<div class="c" style="left:1607.62px;top:80px;background:#66bb6a;overflow:hidden;">Verse 2</div>
<div class="c" style="left:1625.03px;top:80px;background:#66bb6a;overflow:hidden;">Verse 2</div>
<div class="c" style="left:1642.44px;top:80px;background:#66bb6a;overflow:hidden;">Verse 2</div>
<div class="c" style="left:1659.85px;top:80px;background:#66bb6a;">Verse 2</div>
<div class="c" style="left:1677.26px;top:80px;background:#66bb6a;overflow:hidden;">Outro</div>
<div class="c" style="left:1694.67px;top:80px;background:#66bb6a;overflow:hidden;">Outro</div>
<div class="c" style="left:1712.08px;top:80px;background:#66bb6a;">Outro</div>
<div class="c" style="left:841.58px;top:104px;background:#f8a8c3;overflow:hidden;">Verse 1</div>
<div class="c" style="left:858.99px;top:104px;background:#f8a8c3;overflow:hidden;">Verse 1</div>
<div class="c" style="left:876.40px;top:104px;background:#f8a8c3;overflow:hidden;">Verse 1</div>
<div class="c" style="left:893.81px;top:104px;background:#f8a8c3;overflow:hidden;">Verse 1</div>
<div class="c" style="left:911.22px;top:104px;background:#f8a8c3;overflow:hidden;">Verse 1</div>
<div class="c" style="left:928.63px;top:104px;background:#f8a8c3;overflow:hidden;">Verse 1</div>
<div class="c" style="left:946.04px;top:104px;background:#f8a8c3;overflow:hidden;">Verse 1</div>
<div class="c" style="left:963.45px;top:104px;background:#f8a8c3;overflow:hidden;">Verse 1</div>
<div class="c" style="left:980.86px;top:104px;background:#f8a8c3;overflow:hidden;">Verse 1</div>
<div class="c" style="left:998.27px;top:104px;background:#f8a8c3;overflow:hidden;">Verse 1</div>
<div class="c" style="left:1015.68px;top:104px;background:#f8a8c3;overflow:hidden;">Verse 1</div>
<div class="c" style="left:1033.09px;top:104px;background:#f8a8c3;overflow:hidden;">Verse 1</div>
<div class="c" style="left:1050.50px;top:104px;background:#f8a8c3;overflow:hidden;">Verse 1</div>
<div class="c" style="left:1067.91px;top:104px;background:#f8a8c3;overflow:hidden;">Verse 1</div>
<div class="c" style="left:1085.32px;top:104px;background:#f8a8c3;overflow:hidden;">Verse 1</div>
<div class="c" style="left:1102.73px;top:104px;background:#f8a8c3;">Verse 1</div>
<div class="c" style="left:1120.14px;top:104px;background:#f8a8c3;overflow:hidden;">Chorus 1</div>
<div class="c" style="left:1137.55px;top:104px;background:#f8a8c3;overflow:hidden;">Chorus 1</div>
<div class="c" style="left:1154.96px;top:104px;background:#f8a8c3;overflow:hidden;">Chorus 1</div>
<div class="c" style="left:1172.37px;top:104px;background:#f8a8c3;overflow:hidden;">Chorus 1</div>
<div class="c" style="left:1189.78px;top:104px;background:#f8a8c3;overflow:hidden;">Chorus 1</div>
<div class="c" style="left:1207.19px;top:104px;background:#f8a8c3;overflow:hidden;">Chorus 1</div>
<div class="c" style="left:1224.60px;top:104px;background:#f8a8c3;overflow:hidden;">Chorus 1</div>
<div class="c" style="left:1242.01px;top:104px;background:#f8a8c3;overflow:hidden;">Chorus 1</div>
<div class="c" style="left:1259.42px;top:104px;background:#f8a8c3;overflow:hidden;">Chorus 1</div>
<div class="c" style="left:1276.83px;top:104px;background:#f8a8c3;overflow:hidden;">Chorus 1</div>
<div class="c" style="left:1294.24px;top:104px;background:#f8a8c3;overflow:hidden;">Chorus 1</div>
<div class="c" style="left:1311.65px;top:104px;background:#f8a8c3;overflow:hidden;">Chorus 1</div>
<div class="c" style="left:1329.06px;top:104px;background:#f8a8c3;overflow:hidden;">Chorus 1</div>
<div class="c" style="left:1346.47px;top:104px;background:#f8a8c3;overflow:hidden;">Chorus 1</div>
<div class="c" style="left:1363.88px;top:104px;background:#f8a8c3;overflow:hidden;">Chorus 1</div>
<div class="c" style="left:1381.29px;top:104px;background:#f8a8c3;">Chorus 1</div>
<div class="c" style="left:1398.70px;top:104px;background:#f8a8c3;overflow:hidden;">Verse 2</div>
<div class="c" style="left:1416.11px;top:104px;background:#f8a8c3;overflow:hidden;">Verse 2</div>
<div class="c" style="left:1433.52px;top:104px;background:#f8a8c3;overflow:hidden;">Verse 2</div>
<div class="c" style="left:1450.93px;top:104px;background:#f8a8c3;overflow:hidden;">Verse 2</div>
<div class="c" style="left:1468.34px;top:104px;background:#f8a8c3;overflow:hidden;">Verse 2</div>
<div class="c" style="left:1485.75px;top:104px;background:#f8a8c3;overflow:hidden;">Verse 2</div>
<div class="c" style="left:1503.16px;top:104px;background:#f8a8c3;overflow:hidden;">Verse 2</div>
<div class="c" style="left:1520.57px;top:104px;background:#f8a8c3;overflow:hidden;">Verse 2</div>
<div class="c" style="left:1537.98px;top:104px;background:#f8a8c3;overflow:hidden;">Verse 2</div>
<div class="c" style="left:1555.39px;top:104px;background:#f8a8c3;overflow:hidden;">Verse 2</div>
<div class="c" style="left:1572.80px;top:104px;background:#f8a8c3;overflow:hidden;">Verse 2</div>
<div class="c" style="left:1590.21px;top:104px;background:#f8a8c3;overflow:hidden;">Verse 2</div>
<div class="c" style="left:1607.62px;top:104px;background:#f8a8c3;overflow:hidden;">Verse 2</div>
<div class="c" style="left:1625.03px;top:104px;background:#f8a8c3;overflow:hidden;">Verse 2</div>
<div class="c" style="left:1642.44px;top:104px;background:#f8a8c3;overflow:hidden;">Verse 2</div>
<div class="c" style="left:1659.85px;top:104px;background:#f8a8c3;">Verse 2</div>
<div class="c" style="left:1677.26px;top:104px;background:#f8a8c3;overflow:hidden;">Outro</div>
<div class="c" style="left:1694.67px;top:104px;background:#f8a8c3;overflow:hidden;">Outro</div>
<div class="c" style="left:1712.08px;top:104px;background:#f8a8c3;overflow:hidden;">Outro</div>
<div class="c" style="left:1729.49px;top:104px;background:#f8a8c3;overflow:hidden;">Outro</div>
<div class="c" style="left:1746.90px;top:104px;background:#f8a8c3;">Outro</div>
<div class="c" style="left:841.58px;top:128px;background:#4dd0e1;overflow:hidden;">Verse 1</div>
<div class="c" style="left:858.99px;top:128px;background:#4dd0e1;overflow:hidden;">Verse 1</div>
<div class="c" style="left:876.40px;top:128px;background:#4dd0e1;overflow:hidden;">Verse 1</div>
<div class="c" style="left:893.81px;top:128px;background:#4dd0e1;overflow:hidden;">Verse 1</div>
<div class="c" style="left:911.22px;top:128px;background:#4dd0e1;overflow:hidden;">Verse 1</div>
<div class="c" style="left:928.63px;top:128px;background:#4dd0e1;overflow:hidden;">Verse 1</div>
<div class="c" style="left:946.04px;top:128px;background:#4dd0e1;overflow:hidden;">Verse 1</div>
<div class="c" style="left:963.45px;top:128px;background:#4dd0e1;overflow:hidden;">Verse 1</div>
<div class="c" style="left:980.86px;top:128px;background:#4dd0e1;overflow:hidden;">Verse 1</div>
<div class="c" style="left:998.27px;top:128px;background:#4dd0e1;overflow:hidden;">Verse 1</div>
<div class="c" style="left:1015.68px;top:128px;background:#4dd0e1;overflow:hidden;">Verse 1</div>
<div class="c" style="left:1033.09px;top:128px;background:#4dd0e1;overflow:hidden;">Verse 1</div>
<div class="c" style="left:1050.50px;top:128px;background:#4dd0e1;overflow:hidden;">Verse 1</div>
<div class="c" style="left:1067.91px;top:128px;background:#4dd0e1;overflow:hidden;">Verse 1</div>
<div class="c" style="left:1085.32px;top:128px;background:#4dd0e1;overflow:hidden;">Verse 1</div>
<div class="c" style="left:1102.73px;top:128px;background:#4dd0e1;">Verse 1</div>
<div class="c" style="left:1398.70px;top:128px;background:#4dd0e1;overflow:hidden;">Verse 2</div>
<div class="c" style="left:1416.11px;top:128px;background:#4dd0e1;overflow:hidden;">Verse 2</div>
<div class="c" style="left:1433.52px;top:128px;background:#4dd0e1;overflow:hidden;">Verse 2</div>
<div class="c" style="left:1450.93px;top:128px;background:#4dd0e1;overflow:hidden;">Verse 2</div>
<div class="c" style="left:1468.34px;top:128px;background:#4dd0e1;overflow:hidden;">Verse 2</div>
<div class="c" style="left:1485.75px;top:128px;background:#4dd0e1;overflow:hidden;">Verse 2</div>
<div class="c" style="left:1503.16px;top:128px;background:#4dd0e1;overflow:hidden;">Verse 2</div>
<div class="c" style="left:1520.57px;top:128px;background:#4dd0e1;overflow:hidden;">Verse 2</div>
<div class="c" style="left:1537.98px;top:128px;background:#4dd0e1;overflow:hidden;">Verse 2</div>
<div class="c" style="left:1555.39px;top:128px;background:#4dd0e1;overflow:hidden;">Verse 2</div>
<div class="c" style="left:1572.80px;top:128px;background:#4dd0e1;overflow:hidden;">Verse 2</div>
<div class="c" style="left:1590.21px;top:128px;background:#4dd0e1;overflow:hidden;">Verse 2</div>
<div class="c" style="left:1607.62px;top:128px;background:#4dd0e1;overflow:hidden;">Verse 2</div>
<div class="c" style="left:1625.03px;top:128px;background:#4dd0e1;overflow:hidden;">Verse 2</div>
<div class="c" style="left:1642.44px;top:128px;background:#4dd0e1;overflow:hidden;">Verse 2</div>
<div class="c" style="left:1659.85px;top:128px;background:#4dd0e1;">Verse 2</div>
<div class="c" style="left:1677.26px;top:128px;background:#4dd0e1;overflow:hidden;">Outro</div>
<div class="c" style="left:1694.67px;top:128px;background:#4dd0e1;overflow:hidden;">Outro</div>
<div class="c" style="left:1712.08px;top:128px;background:#4dd0e1;overflow:hidden;">Outro</div>
<div class="c" style="left:1729.49px;top:128px;background:#4dd0e1;overflow:hidden;">Outro</div>
<div class="c" style="left:1746.90px;top:128px;background:#4dd0e1;">Outro</div>
<div class="c" style="left:1677.26px;top:152px;background:#9e9e9e;overflow:hidden;">Outro</div>
<div class="c" style="left:1694.67px;top:152px;background:#9e9e9e;overflow:hidden;">Outro</div>
<div class="c" style="left:1712.08px;top:152px;background:#9e9e9e;overflow:hidden;">Outro</div>
<div class="c" style="left:1729.49px;top:152px;background:#9e9e9e;overflow:hidden;">Outro</div>
<div class="c" style="left:1746.90px;top:152px;background:#9e9e9e;">Outro</div>
<div class="c" style="left:806.5px;top:175.5px;width:32.3px;background:#546e7a">Intro</div>
</div>
<div class="t" style="left:570.30px;top:886.20px;color:#e2e2e2;letter-spacing:0.011px;">Drums</div>
<div class="t" style="left:570.30px;top:910.20px;color:#e2e2e2;letter-spacing:-0.450px;transform:scaleX(0.9375);transform-origin:0 0;">Bass</div>
<div class="t" style="left:570.30px;top:934.20px;color:#e2e2e2;letter-spacing:-0.450px;transform:scaleX(0.9868);transform-origin:0 0;">Pad</div>
<div class="t" style="left:570.30px;top:958.20px;color:#e2e2e2;letter-spacing:-0.075px;">Chords</div>
<div class="t" style="left:570.30px;top:982.20px;color:#e2e2e2;letter-spacing:0.090px;">Pluck</div>
<div class="t" style="left:570.30px;top:1006.20px;color:#e2e2e2;letter-spacing:0.353px;">Arp</div>
<div class="t" style="left:570.30px;top:1030.20px;color:#e2e2e2;letter-spacing:-0.240px;">Layer</div>
<div class="t" style="left:570.30px;top:1054.20px;color:#e2e2e2;letter-spacing:-0.450px;transform:scaleX(0.9864);transform-origin:0 0;">Riser</div>
<div class="r" style="left:562px;top:1092px;width:1253px;height:40px;background:#e58f26;border-radius:6px;"></div>
<div class="t" style="left:1123.50px;top:1104.80px;color:#f6e7d2;letter-spacing:0.065px;">Regenerate Arrangement</div>
<svg class="r" style="left:1826px;top:1149px" width="12" height="12" viewBox="0 0 12 12"><path d="M12 0 L12 12 L0 12z" fill="#263a56"/></svg>
</body></html>
